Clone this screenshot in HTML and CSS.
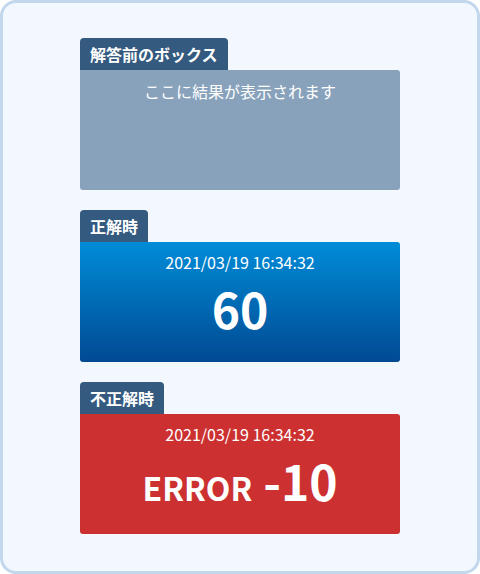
FILE: index.html
```html
<!DOCTYPE html>
<html lang="ja">
<head>
    <meta charset="UTF-8">
    <meta name="viewport" content="width=device-width, initial-scale=1.0">
    <title>結果ボックス</title>
    <link rel="stylesheet" href="styles.css">
</head>
<body>
    <div class="frame">
        <div class="result-block">
            <div class="result-label">解答前のボックス</div>
            <div class="result-box before">
                <p class="result-message">ここに結果が表示されます</p>
            </div>
        </div>
        <div class="result-block">
            <div class="result-label">正解時</div>
            <div class="result-box correct">
                <p class="result-date">2021/03/19 16:34:32</p>
                <p class="result-score">60</p>
            </div>
        </div>
        <div class="result-block">
            <div class="result-label">不正解時</div>
            <div class="result-box wrong">
                <p class="result-date">2021/03/19 16:34:32</p>
                <p class="result-score"><span class="error-word">ERROR</span> -10</p>
            </div>
        </div>
    </div>
</body>
</html>
```

FILE: styles.css
```css
html, body {
    margin: 0;
    height: 100%;
}
body {
    font-family: "Noto Sans CJK JP", "Noto Sans", sans-serif;
    background: #ffffff;
}
.frame {
    box-sizing: border-box;
    height: 574px;
    border: 3px solid #c2d6ec;
    border-radius: 16px;
    background: #f3f8fe;
    padding: 35px 77px 0;
    display: flex;
    flex-direction: column;
    gap: 20px;
}
.result-block {
    display: flex;
    flex-direction: column;
    align-items: flex-start;
}
.result-label {
    background: #345a80;
    color: #ffffff;
    font-size: 16px;
    font-weight: 700;
    line-height: 32px;
    height: 32px;
    padding: 0 10px;
    border-radius: 4px 4px 0 0;
}
.result-box {
    box-sizing: border-box;
    width: 320px;
    height: 120px;
    border-radius: 0 3px 3px 3px;
    color: #ffffff;
    text-align: center;
    padding-top: 9px;
}
.result-box p {
    margin: 0;
}
.before {
    background: #88a2bc;
}
.correct {
    background: linear-gradient(to bottom, #008cd8, #004a92);
}
.wrong {
    background: #cc3030;
}
.result-message {
    font-size: 16px;
    line-height: 24px;
}
.result-date {
    font-size: 16px;
    line-height: 22px;
}
.result-score {
    font-size: 48px;
    font-weight: 700;
    line-height: 60px;
    margin-top: 5px !important;
}
.error-word {
    font-size: 32px;
}
```
